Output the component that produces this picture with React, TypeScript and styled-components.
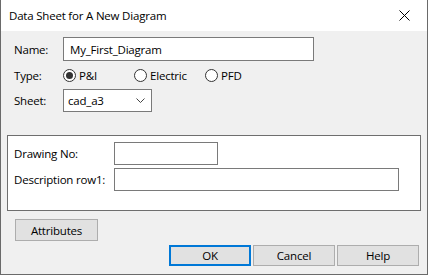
import React from "react";
import styled, { createGlobalStyle } from "styled-components";

const GlobalStyle = createGlobalStyle`
  html, body {
    margin: 0;
    padding: 0;
    background: #f0f0f0;
  }
  body {
    font-family: "Open Sans", "Noto Sans", "Liberation Sans", sans-serif;
    font-size: 11.5px;
    letter-spacing: -0.2px;
    color: #000;
  }
`;

const typeOptions = ["P&I", "Electric", "PFD"];

export default function App() {
  return (
    <>
      <GlobalStyle />
      <Window>
        <TitleBar>
          <Title>Data Sheet for A New Diagram</Title>
          <CloseButton aria-label="Close">
            <svg width="11" height="11" viewBox="0 0 11 11">
              <path d="M0.5 0.5 L10.5 10.5 M10.5 0.5 L0.5 10.5" stroke="#000" strokeWidth="1" fill="none" />
            </svg>
          </CloseButton>
        </TitleBar>
        <Body>
          <FormGrid>
            <Label>Name:</Label>
            <TextBox $width={251} $height={24} defaultValue="My_First_Diagram" />

            <Label>Type:</Label>
            <RadioGroup>
              {typeOptions.map((opt, i) => (
                <RadioOption key={opt}>
                  <RadioCircle $checked={i === 0} />
                  <span>{opt}</span>
                </RadioOption>
              ))}
            </RadioGroup>

            <Label>Sheet:</Label>
            <Select>
              <span>cad_a3</span>
              <svg width="9" height="5" viewBox="0 0 9 5">
                <polyline points="0.5,0.5 4.5,4.5 8.5,0.5" stroke="#444" strokeWidth="1" fill="none" />
              </svg>
            </Select>
          </FormGrid>

          <GroupBox>
            <GroupLabel>Drawing No:</GroupLabel>
            <TextBox $width={104} $height={23} />
            <GroupLabel>Description row1:</GroupLabel>
            <TextBox $width={285} $height={23} />
          </GroupBox>

          <AttributesButton>Attributes</AttributesButton>

          <Footer>
            <DialogButton $default>OK</DialogButton>
            <DialogButton>Cancel</DialogButton>
            <DialogButton>Help</DialogButton>
          </Footer>
        </Body>
      </Window>
    </>
  );
}

const Window = styled.div`
  width: 428px;
  height: 275px;
  box-sizing: border-box;
  border: 1px solid #6a6a6a;
  border-top: none;
  display: flex;
  flex-direction: column;
  background: #f0f0f0;
`;

const TitleBar = styled.div`
  height: 31px;
  flex: none;
  background: #fff;
  display: flex;
  align-items: center;
  justify-content: space-between;
  padding-left: 8px;
`;

const Title = styled.div`
  font-size: 11.5px;
  padding-bottom: 1px;
`;

const CloseButton = styled.div`
  width: 46px;
  height: 31px;
  display: flex;
  align-items: center;
  justify-content: center;
  margin-right: -1px;
  padding-right: 1px;
  box-sizing: border-box;
`;

const Body = styled.div`
  flex: 1;
  display: flex;
  flex-direction: column;
  padding: 6px 6px 0 6px;
`;

const FormGrid = styled.div`
  display: grid;
  grid-template-columns: 49px auto;
  grid-template-rows: 24px 28px 23px;
  align-items: center;
  justify-items: start;
  margin-left: 7px;
`;

const Label = styled.div`
  white-space: nowrap;
`;

const TextBox = styled.input<{ $width: number; $height: number }>`
  width: ${(p) => p.$width}px;
  height: ${(p) => p.$height}px;
  box-sizing: border-box;
  border: 1px solid #7a7a7a;
  background: #fff;
  font: inherit;
  letter-spacing: inherit;
  color: #000;
  padding: 0 6px;
  margin: 0;
  outline: none;
`;

const RadioGroup = styled.div`
  display: flex;
  align-items: center;
`;

const RadioOption = styled.label`
  width: 71px;
  display: flex;
  align-items: center;
  gap: 3px;
`;

const RadioCircle = styled.span<{ $checked?: boolean }>`
  width: 13px;
  height: 13px;
  box-sizing: border-box;
  border-radius: 50%;
  border: 1px solid #333;
  background: #fff;
  display: flex;
  align-items: center;
  justify-content: center;
  flex: none;

  &::after {
    content: "";
    display: ${(p) => (p.$checked ? "block" : "none")};
    width: 7px;
    height: 7px;
    border-radius: 50%;
    background: #333;
  }
`;

const Select = styled.div`
  width: 89px;
  height: 23px;
  box-sizing: border-box;
  border: 1px solid #7a7a7a;
  background: #fff;
  display: flex;
  align-items: center;
  justify-content: space-between;
  padding: 0 6px 0 4px;
`;

const GroupBox = styled.div`
  margin-top: 23px;
  height: 76px;
  box-sizing: border-box;
  border: 1px solid #6e6e6e;
  background: #fff;
  padding: 6px 0 0 6px;
  display: grid;
  grid-template-columns: 100px auto;
  grid-auto-rows: 23px;
  row-gap: 3px;
  align-items: center;
  justify-items: start;
`;

const GroupLabel = styled.div`
  white-space: nowrap;
`;

const ButtonBase = styled.div`
  box-sizing: border-box;
  background: #e1e1e1;
  border: 1px solid #adadad;
  display: flex;
  align-items: center;
  justify-content: center;
`;

const AttributesButton = styled(ButtonBase)`
  margin: 8px 0 0 8px;
  width: 83px;
  height: 22px;
`;

const Footer = styled.div`
  display: flex;
  justify-content: flex-end;
  gap: 2px;
  margin: 4px 2px 0 0;
`;

const DialogButton = styled(ButtonBase)<{ $default?: boolean }>`
  width: 82px;
  height: 21px;
  border: ${(p) => (p.$default ? "2px solid #0078d7" : "1px solid #adadad")};
`;
